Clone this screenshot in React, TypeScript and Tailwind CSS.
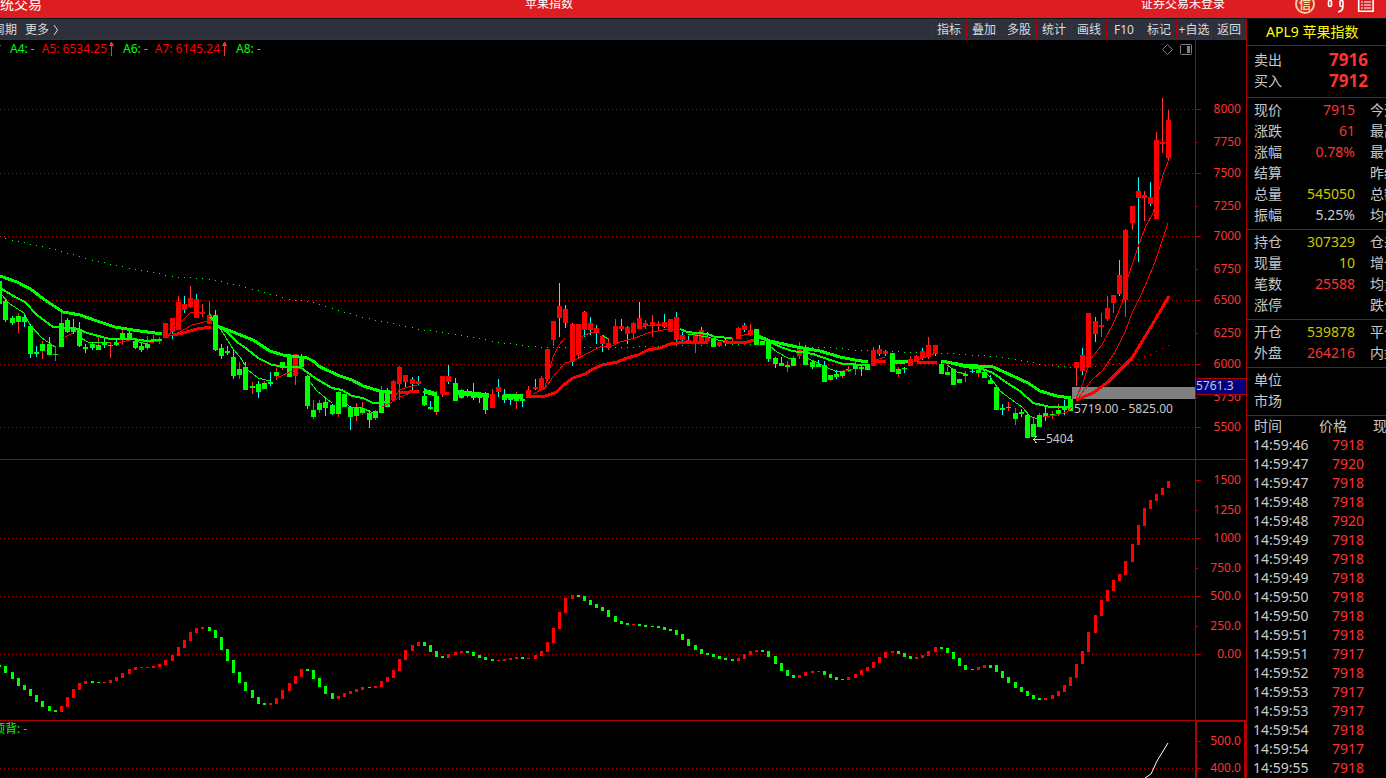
interface Candle {
  wick: string;
  body: string;
  high: number;
  top: number;
  bottom: number;
  low: number;
}

interface QuoteRow {
  label: string;
  value?: string;
  color?: string;
  next?: string;
}

const RED = '#ff0000';
const GREEN = '#00ff00';
const CYAN = '#00ffff';
const WICK_RED = '#ff3232';
const LINE = '#b00000';

const FIRST_BAR = 5.95;
const BAR_STEP = 6.1534;
const barX = (i: number) => Math.floor(FIRST_BAR + BAR_STEP * i);

// wick + body colour, then high / top / bottom / low
const CANDLES = `
cg,281,281,304,304 cg,299,301,320,322 cg,316,318,323,325 rg,313,316,322,333 cg,313,317,322,327
cg,324,326,354,358 cg,346,352,354,357 rg,341,344,351,359 cg,337,344,355,355 rg,346,354,355,361
rg,313,323,347,347 cg,318,320,332,333 cg,319,327,332,334 cg,322,329,346,347 cg,344,347,349,353
cg,342,344,348,350 rg,336,345,350,350 cg,338,343,345,348 rg,342,345,346,358 cg,340,342,345,346
rg,330,333,340,345 cg,331,333,339,340 cg,339,341,348,349 cg,343,346,350,352 rg,336,344,348,350
rg,335,339,340,340 rg,337,339,341,344 rr,323,323,338,338 cr,318,318,332,339 rr,296,302,330,330
cr,296,304,310,313 rr,286,298,307,308 cr,294,299,318,318 rr,304,312,314,317 rr,301,315,324,324
cg,310,315,350,351 cg,344,348,356,359 cg,346,351,353,355 cg,349,357,376,379 rg,362,369,375,379
cg,362,367,390,390 rg,382,386,388,394 cg,381,384,392,398 rg,381,383,389,389 cg,372,382,384,386
rg,368,372,376,380 rg,362,362,368,370 cg,356,356,377,377 rr,354,354,376,385 cg,354,357,367,369
cg,375,376,406,409 rg,400,410,417,419 rg,400,403,410,413 cg,398,402,408,416 cg,404,405,414,415
rg,391,392,414,417 cg,394,394,407,407 cg,406,407,417,430 rg,403,407,416,421 rg,402,408,413,415
cg,410,413,420,428 rg,410,411,418,420 rg,386,391,413,413 cg,388,390,407,407 rr,380,381,400,401
rr,366,367,384,400 cr,375,375,382,387 cr,377,379,384,391 cr,376,381,384,385 cg,388,396,405,406
cg,401,407,409,410 rg,391,396,412,415 rr,376,376,394,397 cr,365,376,382,384 cg,378,383,401,401
rg,389,391,398,399 cg,389,392,395,397 cg,383,392,398,400 cg,393,393,398,403 cg,392,393,410,414
rr,389,394,408,408 cr,379,387,392,397 cg,389,395,400,403 cg,394,396,400,405 rg,392,396,401,409
cg,398,399,401,407 rr,386,390,398,398 cr,379,387,389,390 rr,376,378,390,390 rr,349,349,379,381
rr,321,321,340,346 cr,283,306,318,337 cr,305,309,323,328 cr,323,324,362,366 rr,324,324,355,358
cr,311,312,330,337 cr,317,323,330,335 cr,325,328,333,344 cr,335,336,344,352 rr,338,343,348,350
rr,319,326,344,344 cr,319,326,329,331 cr,326,327,334,344 rr,322,323,333,339 cr,302,318,329,329
rr,320,323,326,329 rr,315,322,326,337 rr,321,324,325,330 cr,314,322,327,328 rr,319,319,332,332
cr,312,317,340,341 cr,332,335,340,341 cr,336,340,343,343 rr,333,333,343,353 cr,327,330,342,342
cr,332,337,341,341 cg,338,338,347,347 rr,342,342,346,347 cr,338,340,343,346 rr,338,342,343,343
rr,327,328,339,339 cr,323,325,330,332 rr,324,330,335,336 cg,329,329,345,345 cg,341,341,345,345
cg,342,342,359,362 cg,357,358,364,368 cg,357,363,366,366 rg,361,365,367,372 rg,356,358,366,366
rr,342,346,356,359 cg,345,347,365,365 cg,361,362,367,369 cg,360,364,367,367 cg,361,365,382,382
rg,375,375,380,381 cg,370,374,377,379 rg,371,371,376,378 rg,366,369,371,372 rg,361,364,369,375
cg,365,367,369,376 cg,364,364,370,370 rr,347,350,366,366 cr,345,349,354,356 cr,350,351,354,356
cg,353,353,372,372 rg,367,369,374,377 cg,367,368,369,373 rr,356,359,366,366 rr,355,356,362,362
cr,348,351,358,360 rr,337,345,357,359 cr,345,345,354,356 cg,362,364,374,374 rg,367,372,375,375
cg,369,369,385,385 cg,379,379,383,383 rg,371,374,376,382 cg,367,371,372,373 rg,367,370,373,377
cg,370,372,378,378 cg,375,380,384,384 cg,385,387,410,410 cg,404,408,410,415 rg,402,407,408,411
rg,408,413,419,425 cg,409,412,414,417 cg,413,415,438,438 rg,418,424,437,437 rg,413,415,427,427
cg,406,413,417,421 rg,411,414,416,419 rg,404,410,414,416 cg,400,407,410,415 cg,399,399,411,411
rr,362,362,368,386 cr,348,355,371,375 rr,313,313,367,367 cr,317,321,334,342 rr,313,325,327,337
rr,296,308,319,321 rr,295,295,303,313 cr,260,275,294,296 rr,229,230,300,317 rr,206,206,223,230
cr,177,191,198,262 rr,191,195,198,221 cr,182,197,204,206 rr,132,140,219,219 rr,98,142,144,153
rr,110,120,158,161`;

const candles: Candle[] = CANDLES.trim().split(/\s+/).map((item) => {
  const [kind, high, top, bottom, low] = item.split(',');
  return {
    wick: kind[0] === 'c' ? CYAN : WICK_RED,
    body: kind[1] === 'g' ? GREEN : RED,
    high: Number(high),
    top: Number(top),
    bottom: Number(bottom),
    low: Number(low),
  };
});

// colour, top, bottom
const HISTOGRAM = `
g665-667 g666-673 g672-679 g678-686 g685-690 g689-696 g695-702 g701-707 g706-711 g710-712
r706-712 r697-707 r689-698 r683-690 r681-684 g681-683 g682-683 r682-683 r680-683 r677-681
r673-678 r669-674 r667-670 r667-668 r667-668 r666-668 r664-667 r660-665 r655-661 r647-656
r640-648 r632-641 r628-633 r627-629 g627-631 g630-638 g637-650 g649-661 g660-673 g672-683
g682-691 g690-698 g697-704 g703-705 r703-705 r698-704 r690-699 r683-691 r676-684 r669-677
g669-671 g670-679 g678-687 g686-694 g693-699 r696-699 r693-697 r691-694 r689-692 r687-690
g687-688 r686-688 r681-687 r677-682 r670-678 r659-671 r650-660 r645-651 r642-646 g642-646
g645-652 g651-657 g656-658 r654-658 r652-655 r651-653 g651-653 g652-656 g655-658 g657-660
g659-661 r660-661 r659-661 r658-660 r657-659 g657-659 r658-659 r655-659 r651-656 r642-652
r628-643 r612-629 r598-613 r595-599 g595-597 g596-601 g600-605 g604-608 g607-611 g610-617
g616-622 g621-624 g623-625 r624-625 g624-626 g625-627 g626-627 g626-628 g627-630 g629-631
g630-635 g634-640 g639-646 g645-650 g649-654 g653-655 g654-657 g656-659 g658-660 g659-661
r658-661 r654-659 r651-655 r650-652 g650-652 g651-657 g656-664 g663-671 g670-676 g675-678
r675-678 r672-676 r671-673 r671-672 g671-675 g674-678 g677-680 g679-680 r677-680 r674-678
r670-675 r667-671 r662-668 r657-663 r652-658 r651-653 g651-654 g653-657 g656-659 r657-659
r655-658 r651-656 r647-652 g647-649 g648-653 g652-659 g658-666 g665-670 g669-670 r667-670
r665-668 g665-668 g665-672 g671-678 g677-683 g682-688 g687-692 g691-696 g695-699 g698-700
r698-700 r695-699 r691-696 r685-692 r677-686 r664-678 r651-664 r632-652 r615-633 r600-616
r590-601 r580-591 r574-581 r561-575 r544-562 r525-545 r508-526 r500-509 r494-501 r488-495
r481-488`;

const histogram = HISTOGRAM.trim().split(/\s+/).map((item) => {
  const [top, bottom] = item.slice(1).split('-').map(Number);
  return { color: item[0] === 'g' ? GREEN : RED, top, bottom };
});

const slowUp = [
  '172,335 183,333 197,329 211,327',
  '400,393 419,391',
  '441,394 449,393',
  '528,397 545,396 555,393 565,384 573,378 585,374 593,369 602,365 617,362 627,358 638,355 648,350 660,348 670,344 683,342 708,342',
  '725,342 747,342 754,340',
  '873,362 886,361',
  '917,362 937,362',
  '1076,400 1093,393 1108,382 1132,358 1143,340 1155,320 1169,296',
];

const slowDown = [
  '0,276 17,282 32,290 42,298 63,312 80,315 97,321 115,327 133,330 162,334',
  '217,326 233,332 253,340 270,351 283,355 307,358 313,361 320,367 340,376 352,380 363,386 380,391 392,393',
  '424,390 437,394',
  '455,391 472,393 489,395',
  '503,395 523,396',
  '758,336 770,341 797,347 820,351 840,357 855,360 868,362',
  '893,361 908,362',
  '941,361 963,365 993,367 1013,376 1028,383 1040,391 1057,396 1071,398',
];

const midDown = [
  '0,288 17,298 25,302 37,315 53,327 78,329 87,333 110,339 133,339 147,341 162,340',
  '210,317 217,325 228,333 237,342 247,349 258,358 272,365 287,367 300,367 315,378 332,388 342,390 352,396 363,398 373,403 390,402',
  '423,392 437,396',
  '455,394 489,397',
  '503,397 523,398',
  '680,329 687,332 708,334 715,337 732,338',
  '758,337 770,342 783,348 793,351 813,354 830,360 843,364 868,365',
  '893,363 905,363',
  '941,361 965,367 983,369 993,373 1007,383 1020,391 1033,403 1050,407 1070,407',
];

const thinDown = [
  '0,293 10,304 24,313 30,325 42,338 55,347',
  '79,337 88,342 110,343',
  '135,341 147,344',
  '209,313 215,322 223,333 233,349 240,357 248,370 258,378 270,381',
  '310,382 317,391 332,403',
  '346,403 350,407 362,408 373,413',
  '602,335 608,339',
  '688,334 708,337 718,340 728,342',
  '770,346 777,352 788,358 793,359',
  '807,358 820,364 828,368 835,371 843,371',
  '947,365 957,372 966,374',
  '983,370 990,377 1000,391 1012,400 1022,407 1030,416 1037,419',
];

const thinUp = [
  '63,338 73,333',
  '117,343 130,340',
  '149,343 159,341',
  '163,338 178,333 192,325 208,321',
  '167,337 173,330 183,320 191,312 202,312',
  '276,378 288,373 300,368',
  '382,407 392,402 399,390 408,387 418,385',
  '390,403 400,397 408,394',
  '535,393 545,387 553,357 559,345 565,338',
  '533,394 545,388 553,377 565,363 573,361 590,352 602,346 612,346 620,342 635,338 648,333 663,330 680,329',
  '578,338 590,333 597,332',
  '637,329 645,326 668,325',
  '740,336 752,333',
  '843,371 853,369',
  '873,361 885,357',
  '917,360 937,353',
  '1044,417 1057,415 1067,412 1072,407',
  '1076,398 1083,383 1090,360 1102,345 1115,320 1122,303 1128,277 1138,247 1145,228 1153,213 1163,175 1168,162',
  '1078,398 1092,380 1103,370 1115,352 1125,332 1132,313 1142,293 1155,262 1168,223',
];

const longAverage = [
  [5, 238], [54, 249], [97, 261], [126, 267], [178, 277], [204, 278], [239, 285], [289, 299],
  [308, 301], [362, 317], [420, 329], [450, 333], [474, 337], [492, 341], [516, 344], [540, 347],
  [620, 347], [680, 345], [754, 344], [805, 347], [830, 347], [856, 350], [885, 351], [950, 353],
  [993, 356], [1027, 361], [1040, 364], [1070, 367], [1106, 366], [1138, 359], [1169, 345],
];

function averageAt(x: number) {
  const k = Math.max(1, longAverage.findIndex((p) => p[0] >= x));
  const [x0, y0] = longAverage[k - 1];
  const [x1, y1] = longAverage[k];
  return Math.round(y0 + ((y1 - y0) * (x - x0)) / (x1 - x0));
}

const priceAxis = [
  ['8000', 109], ['7750', 142], ['7500', 173], ['7250', 206], ['7000', 236], ['6750', 269],
  ['6500', 300], ['6250', 333], ['6000', 364], ['5750', 397], ['5500', 427],
] as const;

const histogramAxis = [
  ['1500', 480], ['1250', 510], ['1000', 538], ['750.0', 568], ['500.0', 596], ['250.0', 626], ['0.00', 654],
] as const;

const bottomAxis = [['500.0', 741], ['', 755], ['400.0', 768]] as const;

const toolbar = ['指标', '叠加', '多股', '统计', '画线', 'F10', '标记', '+自选', '返回'];

const R = 'text-[#ff3232]';
const Y = 'text-[#c8c800]';
const W = 'text-[#c8c8c8]';

const sections: QuoteRow[][] = [
  [
    { label: '现价', value: '7915', color: R, next: '今开' },
    { label: '涨跌', value: '61', color: R, next: '最高' },
    { label: '涨幅', value: '0.78%', color: R, next: '最低' },
    { label: '结算', next: '昨结' },
    { label: '总量', value: '545050', color: Y, next: '总额' },
    { label: '振幅', value: '5.25%', color: W, next: '均价' },
  ],
  [
    { label: '持仓', value: '307329', color: Y, next: '仓差' },
    { label: '现量', value: '10', color: Y, next: '增仓' },
    { label: '笔数', value: '25588', color: R, next: '均量' },
    { label: '涨停', next: '跌停' },
  ],
  [
    { label: '开仓', value: '539878', color: Y, next: '平仓' },
    { label: '外盘', value: '264216', color: R, next: '内盘' },
  ],
  [{ label: '单位' }, { label: '市场' }],
];

const ticks = [
  ['14:59:46', '7918'], ['14:59:47', '7920'], ['14:59:47', '7918'], ['14:59:48', '7918'],
  ['14:59:48', '7920'], ['14:59:49', '7918'], ['14:59:49', '7918'], ['14:59:49', '7918'],
  ['14:59:50', '7918'], ['14:59:50', '7918'], ['14:59:51', '7918'], ['14:59:51', '7917'],
  ['14:59:52', '7918'], ['14:59:53', '7917'], ['14:59:53', '7917'], ['14:59:54', '7918'],
  ['14:59:54', '7917'], ['14:59:55', '7918'],
];

function Header() {
  return (
    <header className="flex h-[19px] shrink-0 items-start overflow-hidden border-b border-[#14161f] bg-[#dc1e23] text-white">
      <div className="flex h-2 flex-1 items-center justify-between">
        <span className="-ml-[14px] w-[56px] whitespace-nowrap text-sm">系统交易</span>
        <span className="text-xs">苹果指数</span>
        <span />
      </div>
      <div className="flex h-2 w-[330px] items-center">
        <span className="ml-[85px] whitespace-nowrap text-xs">证券交易未登录</span>
      </div>
      <div className="absolute right-0 top-0 flex h-4 w-[92px] items-start">
        <svg width="92" height="16" viewBox="1294 0 92 16">
          <circle cx="1305" cy="4" r="9" fill="#d8232a" stroke="#f3cf90" strokeWidth="2" />
          <text x="1305" y="9" textAnchor="middle" fontSize="12" fontWeight="bold" fill="#f8dca0">信</text>
          <g fill="none" stroke="#fff" strokeWidth="1.6">
            <rect x="1328.5" y="0.5" width="3" height="6" rx="1.5" />
            <rect x="1340" y="0.5" width="3" height="6" rx="1.5" />
            <path d="M1343 6q0 5-5 6" />
            <path d="M1358.7-2h14.400v13.300h-14.400z" />
          </g>
          <path d="M1361 2h2m1 0h7M1361 5h2m1 0h7M1361 8h2m1 0h7" stroke="#fff" />
        </svg>
      </div>
    </header>
  );
}

function Toolbar() {
  return (
    <nav className="flex h-[21px] shrink-0 items-stretch justify-between overflow-hidden border-b border-[#b00000] bg-[#2e303c] text-xs text-[#dcdcdc]">
      <div className="-ml-[7px] flex items-center gap-2 whitespace-nowrap pt-[2px]">
        <button>周期</button>
        <button className="flex items-center gap-1">
          更多
          <svg width="6" height="12" viewBox="0 0 6 12" fill="none" stroke="currentColor">
            <path d="M1 1l3.500 5L1 11" />
          </svg>
        </button>
      </div>
      <div className="flex">
        {toolbar.map((item) => (
          <button key={item} className="w-[35px] whitespace-nowrap border-l border-[#b00000] pt-[2px] text-center">
            {item}
          </button>
        ))}
      </div>
    </nav>
  );
}

function UpArrow() {
  return (
    <svg className="ml-[2px]" width="5" height="14" viewBox="0 0 5 14" fill="#ff3232">
      <path d="M2 0h1v14h-1zM1 1h3v2h-3zM0 3h5v1h-5z" />
    </svg>
  );
}

function Legend() {
  return (
    <div className="absolute left-0 top-0 flex h-[18px] items-center gap-[9px] whitespace-nowrap text-xs text-[#00ff00]">
      <span className="-ml-[6px] flex"><UpArrow /></span>
      <span className="flex items-center gap-[7px]">
        A4: -
        <span className="flex items-center text-[#ff0000]">A5: 6534.25<UpArrow /></span>
      </span>
      <span className="flex items-center gap-[7px]">
        A6: -
        <span className="flex items-center text-[#ff0000]">A7: 6145.24<UpArrow /></span>
      </span>
      <span>A8: -</span>
    </div>
  );
}

function GridLine({ y }: { y: number }) {
  return <path d={`M0 ${y + 0.5}H1194`} stroke={LINE} strokeDasharray="1 3" />;
}

function Axis({ rows }: { rows: readonly (readonly [string, number])[] }) {
  return (
    <g>
      {rows.map(([label, y], i) => (
        <g key={y}>
          <path d={`M1196 ${y + 0.5}h${i % 2 ? 2 : 5}`} stroke={LINE} />
          <text x="1241" y={y + 4} textAnchor="end" fontSize="12" fill="#ff3232">{label}</text>
        </g>
      ))}
    </g>
  );
}

function Lines({ points, color, width }: { points: string[]; color: string; width: number }) {
  return (
    <g fill="none" stroke={color} strokeWidth={width}>
      {points.map((p) => <polyline key={p} points={p} />)}
    </g>
  );
}

function PriceChart() {
  return (
    <svg className="block shrink-0" width="1246" height="420" viewBox="0 40 1246 420" shapeRendering="crispEdges">
      {[109, 173, 236, 300, 364, 427].map((y) => <GridLine key={y} y={y} />)}
      <rect x="1072" y="387" width="123" height="12" fill="#808080" />

      {/* long average, one dot per bar */}
      {candles.slice(1).map((_, i) => (
        <rect
          key={i}
          x={barX(i)}
          y={averageAt(barX(i))}
          width="1"
          height="1"
          fill={i > 173 || (i > 103 && i < 122 && i % 3 === 0) ? RED : GREEN}
        />
      ))}
      {candles.map((c, i) => (
        <g key={i}>
          <rect x={barX(i - 1)} y={c.high} width="1" height={c.low - c.high} fill={c.wick} />
          <rect x={barX(i - 1) - 2} y={c.top} width="5" height={c.bottom - c.top} fill={c.body} />
        </g>
      ))}
      <Lines points={thinDown} color={GREEN} width={1} />
      <Lines points={thinUp} color={RED} width={1} />
      <Lines points={midDown} color={GREEN} width={2} />
      <Lines points={slowDown} color={GREEN} width={3} />
      <Lines points={slowUp} color={RED} width={3} />

      <Axis rows={priceAxis} />
      <path d="M1195.500 40V460M0 459.500H1246" stroke={LINE} />
      <rect x="1196" y="378" width="50" height="16" fill="#000080" />
      <path d="M1196 378.500h50M1196 394.500h50" stroke={LINE} />

      <g fontSize="12" fill="#c8c8c8">
        <text x="1196" y="390">5761.3</text>
        <text x="1074" y="413">5719.00 - 5825.00</text>
        <text x="1046" y="443">5404</text>
      </g>
      <path d="M1033 439.500h12M1036.500 436l-3 3.500 3 3.500" fill="none" stroke="#c8c8c8" />

      <g fill="none" stroke="#808080" shapeRendering="auto">
        <path d="M1167.500 44.500l5 5-5 5-5-5z" />
        <rect x="1180.500" y="44.500" width="11" height="10" rx="1" />
        <rect x="1187" y="46" width="3" height="7" fill="#808080" stroke="none" />
      </g>
    </svg>
  );
}

function HistogramChart() {
  return (
    <svg className="block shrink-0" width="1246" height="261" viewBox="0 460 1246 261" shapeRendering="crispEdges">
      {[538, 596, 654].map((y) => <GridLine key={y} y={y} />)}
      {histogram.map((b, i) => (
        <rect key={i} x={barX(i - 1) - 1} y={b.top} width="3" height={b.bottom - b.top} fill={b.color} />
      ))}
      <Axis rows={histogramAxis} />
      <path d="M1195.500 460V721M0 720.500H1246" stroke={LINE} />
    </svg>
  );
}

function DivergenceChart() {
  return (
    <svg className="block shrink-0" width="1246" height="57" viewBox="0 721 1246 57" shapeRendering="crispEdges">
      <GridLine y={768} />
      <Axis rows={bottomAxis} />
      <path d="M1196 721V778M1245 721V778" stroke={LINE} strokeWidth="2" />
      <path d="M1196 721.500H1246" stroke={LINE} />
      <polyline points="1145,778 1151,774 1157,761 1168,743" fill="none" stroke="#fff" shapeRendering="auto" />
    </svg>
  );
}

function Quote() {
  return (
    <aside className="w-[140px] shrink-0 overflow-hidden border-l border-[#b00000] text-sm text-[#c8c8c8]">
      <h1 className="h-[27px] border-b border-[#b00000] pl-[19px] leading-[26px] text-[#ffff00]">APL9 苹果指数</h1>
      <dl className="border-b border-[#b00000] pb-[6px] pt-[3px]">
        {[['卖出', '7916'], ['买入', '7912']].map(([label, value]) => (
          <div key={label} className="flex h-[21px] items-center pl-[7px]">
            <dt className="w-7">{label}</dt>
            <dd className="w-[86px] text-right text-[17px] font-bold leading-5 text-[#ff3232]">{value}</dd>
          </div>
        ))}
      </dl>
      {sections.map((rows) => (
        <dl key={rows[0].label} className="border-b border-[#b00000] pb-1 pt-px">
          {rows.map((row) => (
            <div key={row.label} className="flex h-[21px] items-center whitespace-nowrap pl-[7px]">
              <dt className="w-7 shrink-0">{row.label}</dt>
              <dd className={`w-[73px] shrink-0 text-right ${row.color ?? ''}`}>{row.value}</dd>
              <dt className="ml-[15px]">{row.next}</dt>
            </div>
          ))}
        </dl>
      ))}
      <table className="w-[160px] table-fixed">
        <thead>
          <tr className="h-[19px] whitespace-nowrap text-left leading-[19px]">
            <th className="w-[72px] pl-[7px] font-normal">时间</th>
            <th className="w-[54px] font-normal">价格</th>
            <th className="font-normal">现手</th>
          </tr>
        </thead>
        <tbody>
          {ticks.map(([time, price], i) => (
            <tr key={i} className="h-[19px] leading-[19px]">
              <td className="pl-[6px]">{time}</td>
              <td className="pr-[9px] text-right text-[#ff3232]">{price}</td>
              <td />
            </tr>
          ))}
        </tbody>
      </table>
    </aside>
  );
}

export default function App() {
  return (
    <div className="relative flex h-screen flex-col overflow-hidden bg-black font-['Noto_Sans','Noto_Sans_CJK_SC',sans-serif]">
      <Header />
      <div className="flex min-h-0 flex-1">
        <main className="flex min-w-0 flex-1 flex-col">
          <Toolbar />
          <div className="relative flex justify-end overflow-hidden">
            <PriceChart />
            <Legend />
          </div>
          <div className="flex justify-end overflow-hidden">
            <HistogramChart />
          </div>
          <div className="relative flex justify-end overflow-hidden">
            <DivergenceChart />
            <span className="absolute left-0 top-0 -ml-[7px] text-xs text-[#00ff00]">顶背: -</span>
          </div>
        </main>
        <Quote />
      </div>
    </div>
  );
}
